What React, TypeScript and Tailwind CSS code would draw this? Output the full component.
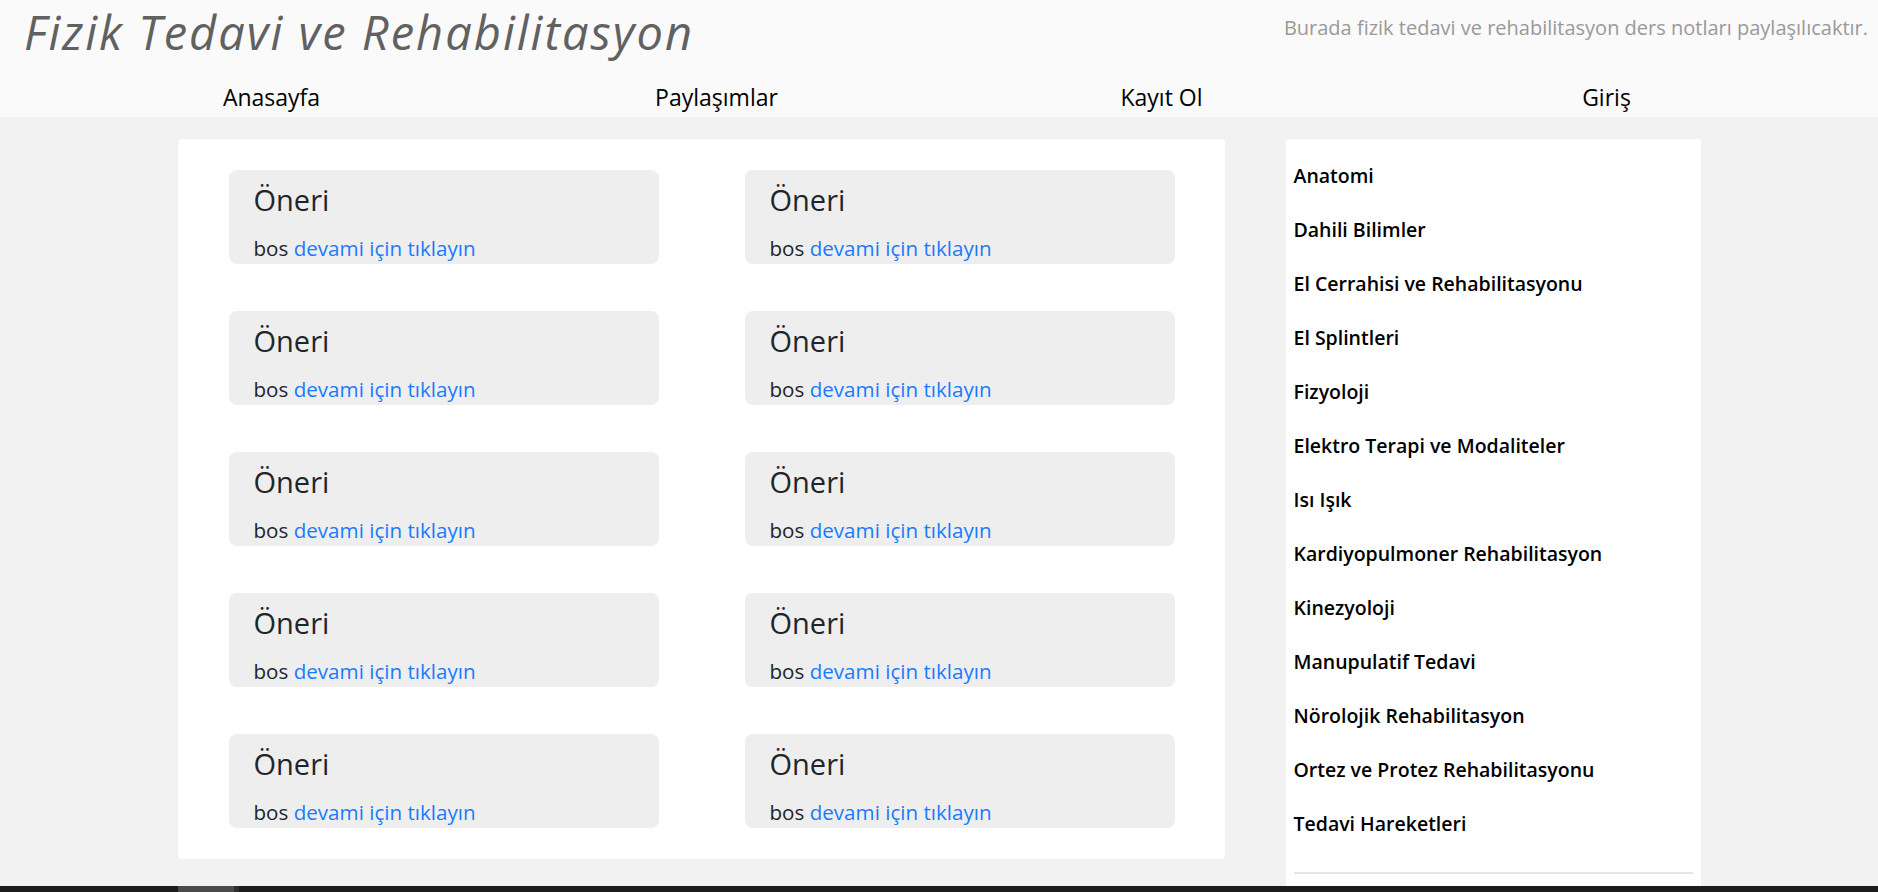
const navLinks = ['Anasayfa', 'Paylaşımlar', 'Kayıt Ol', 'Giriş']

const categories = [
  'Anatomi',
  'Dahili Bilimler',
  'El Cerrahisi ve Rehabilitasyonu',
  'El Splintleri',
  'Fizyoloji',
  'Elektro Terapi ve Modaliteler',
  'Isı Işık',
  'Kardiyopulmoner Rehabilitasyon',
  'Kinezyoloji',
  'Manupulatif Tedavi',
  'Nörolojik Rehabilitasyon',
  'Ortez ve Protez Rehabilitasyonu',
  'Tedavi Hareketleri',
]

const posts = Array.from({ length: 10 }, () => ({ title: 'Öneri', body: 'bos' }))

function PostCard({ title, body }: { title: string; body: string }) {
  return (
    <div className="h-[94px] rounded-lg bg-[#eeeeee] px-[25px] pt-[12px]">
      <h3 className="text-[29px] font-medium leading-[40px] -mt-[2px] text-[#212529]">{title}</h3>
      <p className="mt-[13px] text-[20.6px] leading-[30px] text-[#212529]">
        {body}{' '}
        <a href="#" className="text-[#1a7bff]">
          devami için tıklayın
        </a>
      </p>
    </div>
  )
}

export default function App() {
  return (
    <div className="min-h-screen bg-[#f2f2f2] font-['Open_Sans',sans-serif]">
      {/* header */}
      <header className="h-[117px] bg-[#fafafa]">
        <div className="flex h-[64px] items-start justify-between pl-[24px] pr-[10px]">
          <h1 className="pr-[4px] text-[47px] italic leading-[64px] tracking-[2px] text-[#616161]">
            Fizik Tedavi ve Rehabilitasyon
          </h1>
          <p className="mt-[14px] text-[20px] leading-[28px] text-[#999999]">
            Burada fizik tedavi ve rehabilitasyon ders notları paylaşılıcaktır.
          </p>
        </div>
        <nav className="mx-auto mt-[14px] grid w-[1780px] grid-cols-4 text-center">
          {navLinks.map(link => (
            <a key={link} href="#" className="text-[23px] font-medium leading-[38px] text-black">
              {link}
            </a>
          ))}
        </nav>
      </header>

      {/* content */}
      <main className="mx-auto mt-[22px] flex w-[1523px] items-start gap-[61px]">
        <section className="w-[1047px] rounded bg-white py-[31px] pl-[51px] pr-[50px]">
          <div className="grid grid-cols-2 gap-x-[86px] gap-y-[47px]">
            {posts.map((post, i) => (
              <PostCard key={i} title={post.title} body={post.body} />
            ))}
          </div>
        </section>

        <aside className="w-[415px] rounded-t bg-white px-[8px] pt-[10px] pb-[12px]">
          <ul>
            {categories.map(cat => (
              <li key={cat} className="text-[19.5px] font-semibold leading-[54px] text-black">
                {cat}
              </li>
            ))}
          </ul>
          <hr className="mt-[21px] border-t-2 border-[#e5e5e5]" />
        </aside>
      </main>

      {/* footer */}
      <footer className="h-[60px] bg-[#1c1c1c]">
        <div className="ml-[178px] flex h-full w-[61px]">
          <div className="w-[56px] bg-[#4a4a4a]" />
          <div className="w-[5px] bg-[#2e2e2e]" />
        </div>
      </footer>
    </div>
  )
}
